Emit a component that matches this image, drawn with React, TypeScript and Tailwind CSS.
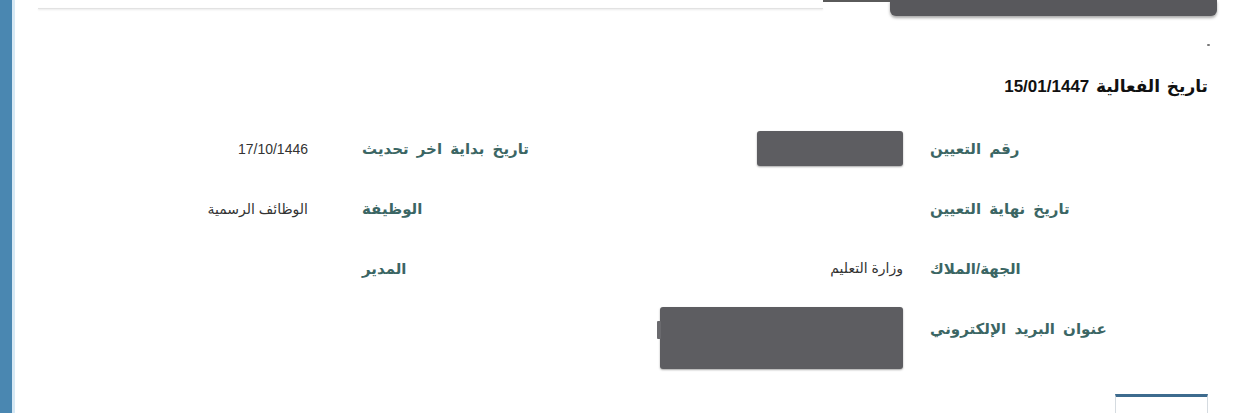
import React from 'react'

interface Field {
  label: string
  value?: string
  redact?: 'short' | 'long'
}

const rows: [Field, Field | null][] = [
  [{ label: 'رقم التعيين', redact: 'short' }, { label: 'تاريخ بداية اخر تحديث', value: '17/10/1446' }],
  [{ label: 'تاريخ نهاية التعيين' }, { label: 'الوظيفة', value: 'الوظائف الرسمية' }],
  [{ label: 'الجهة/الملاك', value: 'وزارة التعليم' }, { label: 'المدير' }],
  [{ label: 'عنوان البريد الإلكتروني', redact: 'long' }, null],
]

function Value({ field }: { field: Field }) {
  if (field.redact === 'short') {
    return <div className="h-[35px] w-[146px] rounded-[3px] bg-[#5d5d61] shadow-[0_1px_2px_rgba(0,0,0,0.35)]" />
  }
  if (field.redact === 'long') {
    return (
      <div className="relative mt-[8px] h-[62px] w-[243px] rounded-[3px] bg-[#5d5d61] shadow-[0_1px_2px_rgba(0,0,0,0.35)]">
        <div className="absolute -left-[3px] top-[14px] h-[18px] w-[4px] rounded-[1px] bg-[#6a6a6e]" />
      </div>
    )
  }
  return <span className="text-[14px] text-[#333]">{field.value}</span>
}

export default function App() {
  return (
    <div className="flex h-[413px] w-full overflow-hidden bg-white font-['Liberation_Sans','DejaVu_Sans',sans-serif]">
      {/* شريط جانبي */}
      <div className="w-[12px] shrink-0 bg-[#4a87b1]" />
      <div className="w-[3px] shrink-0 bg-[#d6e8f4]" />

      <div dir="rtl" className="flex flex-1 flex-col pr-[33px]">
        {/* الشريط العلوي */}
        <div className="-mr-[9px] flex h-[16px] items-start">
          <div className="h-[16px] w-[327px] rounded-b-[6px] bg-[#58585c] shadow-[0_2px_3px_rgba(0,0,0,0.35)]" />
          <div className="h-[2px] w-[67px] bg-[#5a5a5a]" />
          <div className="ml-[23px] mt-[8px] h-px flex-1 bg-[#e2e2e2] shadow-[0_1px_2px_rgba(0,0,0,0.12)]" />
        </div>

        <div className="-mr-[2px] mt-[28px] h-[3px] w-[3px] rounded-full bg-[#777]" />

        <div className="mt-[31px] h-[20px] text-[17px] font-bold leading-[20px] text-[#111] [word-spacing:2px]">
          تاريخ الفعالية 15/01/1447
        </div>

        {/* بيانات التعيين */}
        <div className="mt-[22px] flex flex-col">
          {rows.map(([right, left], i) => (
            <div key={i} className="flex h-[60px] items-center">
              <div className="w-[278px] text-left text-[15px] font-bold text-[#3b6664] [word-spacing:4px]">{right.label}</div>
              <div className={`mr-[27px] flex w-[283px] ${right.redact === 'long' ? 'self-start' : ''}`}>
                {(right.value || right.redact) && <Value field={right} />}
              </div>
              {left && (
                <>
                  <div className="w-[258px] text-left text-[15px] font-bold text-[#3b6664] [word-spacing:4px]">{left.label}</div>
                  <div className="mr-[54px] w-[200px]">
                    {left.value && <Value field={left} />}
                  </div>
                </>
              )}
            </div>
          ))}
        </div>

        {/* زر سفلي */}
        <div className="mt-[35px] h-[30px] w-[93px] border-x border-t-[3px] border-x-[#d5dbe0] border-t-[#3d6b8e] bg-white" />
      </div>
    </div>
  )
}
